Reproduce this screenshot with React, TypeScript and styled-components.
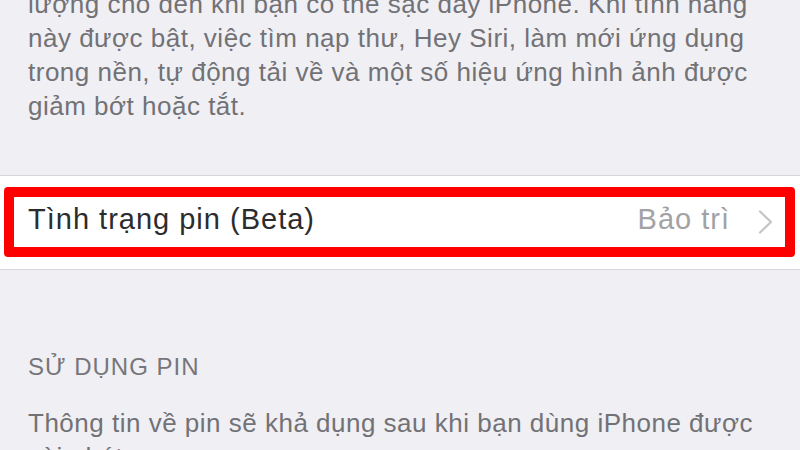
import React from "react";
import styled, { createGlobalStyle } from "styled-components";

const Global = createGlobalStyle`
  html, body { margin: 0; padding: 0; background: #efeff4; }
  body { width: 800px; height: 450px; overflow: hidden; }
`;

const Page = styled.div`
  width: 800px;
  height: 450px;
  overflow: hidden;
  background: #efeff4;
  font-family: "Liberation Sans", Arial, sans-serif;
  display: flex;
  flex-direction: column;
`;

const Footnote = styled.div<{ $top: number }>`
  margin: ${(p) => p.$top}px 0 0 0;
  padding-left: 28px;
  font-size: 26px;
  line-height: 34px;
  color: #727276;
  letter-spacing: 0.5px;
`;

const Line = styled.div`
  white-space: nowrap;
`;

const Group = styled.div`
  margin-top: 52px;
  background: #ffffff;
  border-top: 1px solid #d6d6da;
  border-bottom: 1px solid #d6d6da;
  padding: 11px 5px 12px 4px;
`;

const Highlight = styled.div`
  border: 10px solid #ff0000;
  border-radius: 4px;
`;

const Row = styled.div`
  height: 50px;
  box-sizing: border-box;
  display: flex;
  align-items: center;
  padding: 0 12px 5px 14px;
  gap: 28px;
`;

const Label = styled.span`
  flex: 1;
  font-size: 29px;
  color: #2c2c2e;
  letter-spacing: 1px;
  white-space: nowrap;
`;

const Detail = styled.span`
  font-size: 29px;
  color: #a2a2a6;
  letter-spacing: 1px;
  white-space: nowrap;
`;

const Chevron = styled.svg`
  width: 15px;
  height: 24px;
  flex: none;
  margin-top: 5px;
`;

const Header = styled.div`
  margin-top: 83px;
  padding-left: 28px;
  font-size: 24px;
  line-height: 28px;
  color: #76767a;
  letter-spacing: 1px;
`;

export default function App() {
  return (
    <>
      <Global />
      <Page>
        <Footnote $top={-13}>
          <Line>lượng cho đến khi bạn có thể sạc đầy iPhone. Khi tính năng</Line>
          <Line>này được bật, việc tìm nạp thư, Hey Siri, làm mới ứng dụng</Line>
          <Line>trong nền, tự động tải về và một số hiệu ứng hình ảnh được</Line>
          <Line>giảm bớt hoặc tắt.</Line>
        </Footnote>
        <Group>
          <Highlight>
            <Row>
              <Label>Tình trạng pin (Beta)</Label>
              <Detail>Bảo trì</Detail>
              <Chevron viewBox="0 0 15 24">
                <path
                  d="M2 1.5 L13 12 L2 22.5"
                  fill="none"
                  stroke="#c4c4c8"
                  strokeWidth="2.2"
                  strokeLinecap="round"
                  strokeLinejoin="round"
                />
              </Chevron>
            </Row>
          </Highlight>
        </Group>
        <Header>SỬ DỤNG PIN</Header>
        <Footnote $top={25}>
          <Line>Thông tin về pin sẽ khả dụng sau khi bạn dùng iPhone được</Line>
          <Line>vài phút.</Line>
        </Footnote>
      </Page>
    </>
  );
}
